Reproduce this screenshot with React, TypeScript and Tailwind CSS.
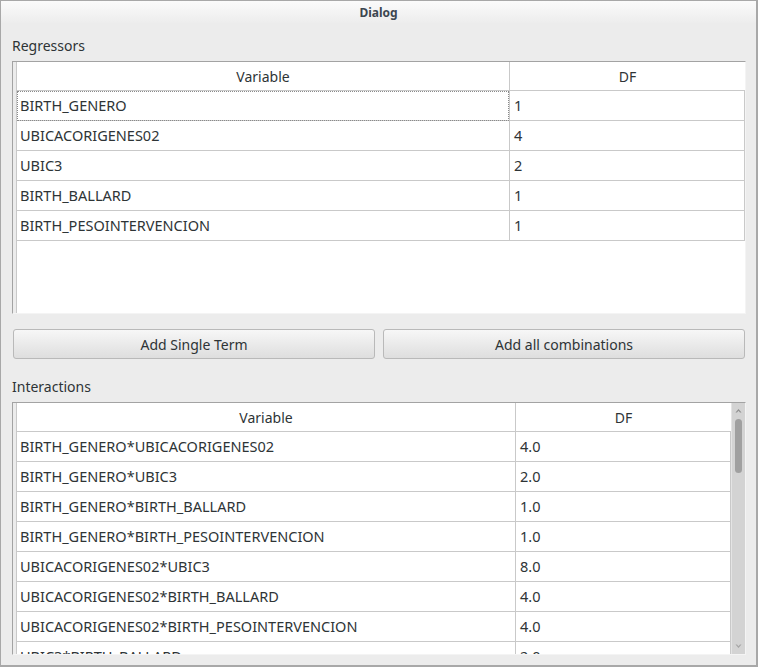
import React from "react";

const regressors = [
  { name: "BIRTH_GENERO", df: "1" },
  { name: "UBICACORIGENES02", df: "4" },
  { name: "UBIC3", df: "2" },
  { name: "BIRTH_BALLARD", df: "1" },
  { name: "BIRTH_PESOINTERVENCION", df: "1" },
];

const interactions = [
  { name: "BIRTH_GENERO*UBICACORIGENES02", df: "4.0" },
  { name: "BIRTH_GENERO*UBIC3", df: "2.0" },
  { name: "BIRTH_GENERO*BIRTH_BALLARD", df: "1.0" },
  { name: "BIRTH_GENERO*BIRTH_PESOINTERVENCION", df: "1.0" },
  { name: "UBICACORIGENES02*UBIC3", df: "8.0" },
  { name: "UBICACORIGENES02*BIRTH_BALLARD", df: "4.0" },
  { name: "UBICACORIGENES02*BIRTH_PESOINTERVENCION", df: "4.0" },
  { name: "UBIC3*BIRTH_BALLARD", df: "2.0" },
];

type Row = { name: string; df: string };

function Table({
  rows,
  varWidth,
  dfWidth,
  focusFirst,
  scroll,
}: {
  rows: Row[];
  varWidth: string;
  dfWidth: string;
  focusFirst?: boolean;
  scroll?: boolean;
}) {
  return (
    <div className="flex h-full border-t border-l border-[#a3a3a3] border-r border-b border-r-[#f4f4f4] border-b-[#f4f4f4] bg-white overflow-hidden">
      <div className="w-[4px] shrink-0 bg-[#ececec] border-r border-[#c9c9c9]" />
      <div className="flex-1 min-w-0 flex flex-col overflow-hidden">
        <div className="flex h-[29px] shrink-0 border-b border-[#c9c9c9]">
          <div className={`${varWidth} shrink-0 flex items-center justify-center`}>Variable</div>
          <div className={`${dfWidth} shrink-0 flex items-center justify-center border-l border-[#c9c9c9]`}>
            DF
          </div>
        </div>
        {rows.map((r, i) => (
          <div key={r.name} className="flex h-[30px] shrink-0 text-[14.5px]">
            <div
              className={`${varWidth} shrink-0 flex items-center pl-[3px] border-b border-[#c9c9c9] ${
                focusFirst && i === 0 ? "outline outline-1 outline-dotted outline-[#8a8a8a] -outline-offset-1" : ""
              }`}
            >
              {r.name}
            </div>
            <div className={`${dfWidth} shrink-0 flex items-center pl-[4px] border-l border-b border-r border-[#c9c9c9]`}>
              {r.df}
            </div>
          </div>
        ))}
      </div>
      {scroll && (
        <div className="w-[14px] shrink-0 bg-[#d3d3d3] border-l border-[#e4e4e4] flex flex-col items-center">
          <svg width="7" height="5" viewBox="0 0 7 5" className="mt-[5px]">
            <path d="M0.5 4.5 L3.5 1 L6.5 4.5 L5 4.5 L3.5 2.8 L2 4.5 Z" fill="#8f8f8f" />
          </svg>
          <div className="mt-[6px] w-[7px] h-[54px] rounded-full bg-[#a0a0a0]" />
          <div className="flex-1" />
          <svg width="7" height="5" viewBox="0 0 7 5" className="mb-[5px]">
            <path d="M0.5 0.5 L3.5 4 L6.5 0.5 L5 0.5 L3.5 2.2 L2 0.5 Z" fill="#a5a5a5" />
          </svg>
        </div>
      )}
    </div>
  );
}

function Button({ label }: { label: string }) {
  return (
    <button
      type="button"
      className="flex-1 h-[30px] rounded-[3px] border border-[#b9b9b9] bg-gradient-to-b from-[#f7f7f7] to-[#dedede] text-[14px] text-[#2e3436] flex items-center justify-center"
    >
      {label}
    </button>
  );
}

export default function App() {
  return (
    <div
      className="w-[758px] h-[667px] bg-[#ececec] border-l border-t border-r-2 border-b-2 border-[#a8a8a8] flex flex-col text-[#2e3436] text-[14px] overflow-hidden"
      style={{ fontFamily: '"Noto Sans", "Open Sans", sans-serif' }}
    >
      <div className="h-[23px] shrink-0 bg-gradient-to-b from-[#fbfbfb] to-[#ececec] flex items-center justify-center">
        <span className="text-[12px] font-bold text-[#3c4650]">Dialog</span>
      </div>
      <div className="flex-1 min-h-0 flex flex-col pl-[11px] pr-[10px] pb-[10px]">
        <div className="h-[20px] mt-[11px] shrink-0 flex items-center">Regressors</div>
        <div className="h-[253px] mt-[6px] shrink-0">
          <Table rows={regressors} varWidth="w-[492px]" dfWidth="w-[236px]" focusFirst />
        </div>
        <div className="flex gap-[8px] mt-[15px] px-px shrink-0">
          <Button label="Add Single Term" />
          <Button label="Add all combinations" />
        </div>
        <div className="h-[20px] mt-[17px] shrink-0 flex items-center">Interactions</div>
        <div className="flex-1 mt-[6px] min-h-0">
          <Table rows={interactions} varWidth="w-[498px]" dfWidth="w-[216px]" scroll />
        </div>
      </div>
    </div>
  );
}
